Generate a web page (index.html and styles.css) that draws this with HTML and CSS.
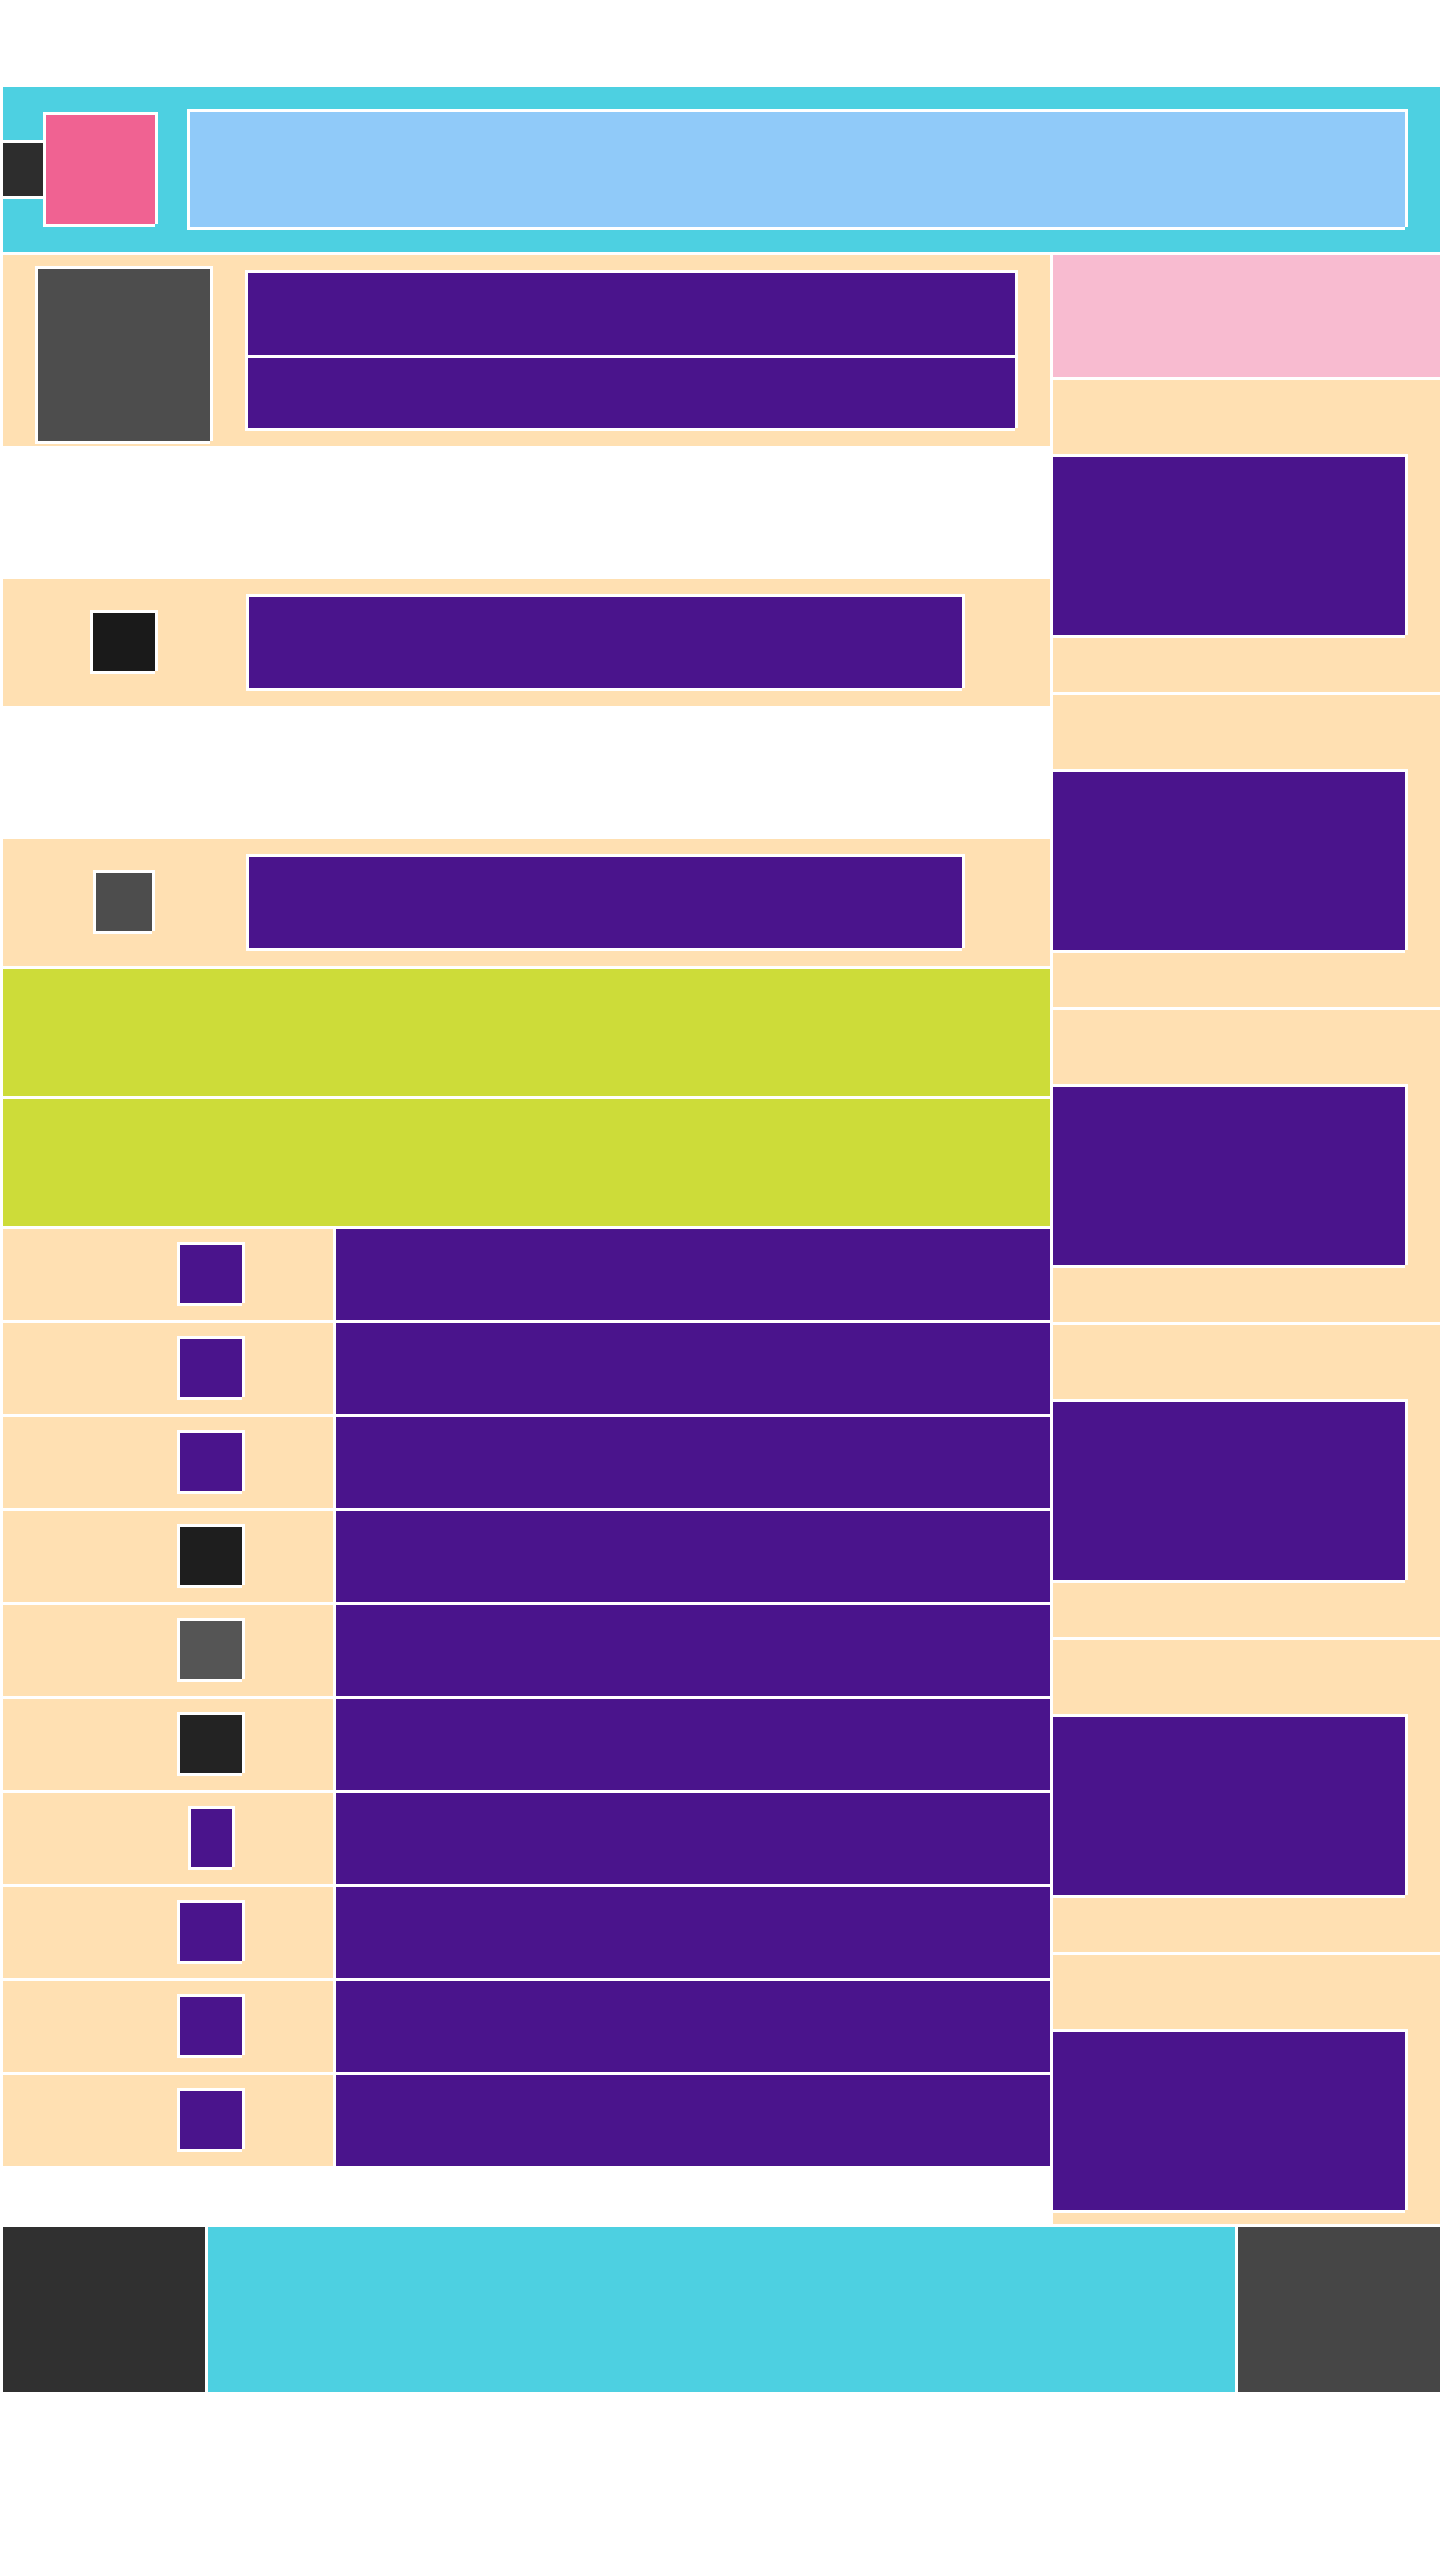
FILE: index.html
```html
<!DOCTYPE html>
<html lang="en">
<head>
<meta charset="utf-8">
<title>Page</title>
<link rel="stylesheet" href="styles.css">
</head>
<body>
<div class="page">
  <header class="header">
    <div class="menu-button"></div>
    <div class="logo frame"></div>
    <div class="search frame"></div>
  </header>
  <main class="main">
    <div class="content">
      <section class="feature">
        <div class="feature-thumb frame"></div>
        <div class="feature-text">
          <div class="feature-title frame"></div>
          <div class="feature-meta frame"></div>
        </div>
      </section>
      <section class="item item-spaced">
        <div class="item-slot"><div class="thumb thumb-wide tone-black frame"></div></div>
        <div class="item-text frame"></div>
      </section>
      <section class="item item-spaced">
        <div class="item-slot"><div class="thumb thumb-mid tone-gray frame"></div></div>
        <div class="item-text frame"></div>
      </section>
      <div class="banner"></div>
      <div class="banner"></div>
      <div class="row"><div class="row-icon"><div class="icon tone-purple frame"></div></div><div class="row-text"></div></div>
      <div class="row"><div class="row-icon"><div class="icon tone-purple frame"></div></div><div class="row-text"></div></div>
      <div class="row"><div class="row-icon"><div class="icon tone-purple frame"></div></div><div class="row-text"></div></div>
      <div class="row"><div class="row-icon"><div class="icon tone-ink frame"></div></div><div class="row-text"></div></div>
      <div class="row"><div class="row-icon"><div class="icon tone-slate frame"></div></div><div class="row-text"></div></div>
      <div class="row"><div class="row-icon"><div class="icon tone-coal frame"></div></div><div class="row-text"></div></div>
      <div class="row"><div class="row-icon"><div class="icon icon-narrow tone-purple frame"></div></div><div class="row-text"></div></div>
      <div class="row"><div class="row-icon"><div class="icon tone-purple frame"></div></div><div class="row-text"></div></div>
      <div class="row"><div class="row-icon"><div class="icon tone-purple frame"></div></div><div class="row-text"></div></div>
      <div class="row"><div class="row-icon"><div class="icon tone-purple frame"></div></div><div class="row-text"></div></div>
    </div>
    <aside class="sidebar">
      <div class="promo"></div>
      <div class="card"><div class="card-media frame"></div></div>
      <div class="card"><div class="card-media frame"></div></div>
      <div class="card"><div class="card-media frame"></div></div>
      <div class="card"><div class="card-media frame"></div></div>
      <div class="card"><div class="card-media frame"></div></div>
      <div class="card card-last"><div class="card-media frame"></div></div>
    </aside>
  </main>
  <footer class="footer">
    <div class="footer-start"></div>
    <div class="footer-middle"></div>
    <div class="footer-end"></div>
  </footer>
</div>
</body>
</html>
```

FILE: styles.css
```css
html, body {
  margin: 0;
  background: #fff;
}

.page {
  display: flex;
  flex-direction: column;
  gap: 3px;
  padding: 87px 0 0 3px;
}

/* White 3px outline with the bottom-right corner left open */
.frame {
  box-shadow:
    -3px -3px 0 #fff,
    3px -3px 0 #fff,
    -3px 3px 0 #fff,
    3px 0 0 #fff,
    0 3px 0 #fff;
}

.header {
  display: flex;
  align-items: center;
  height: 165px;
  background: #4dd0e1;
}

.menu-button {
  width: 40px;
  height: 53px;
  background: #2d2d2d;
  box-shadow: 0 -3px 0 #fff, 0 3px 0 #fff;
}

.logo {
  width: 109px;
  height: 109px;
  margin-left: 3px;
  background: #f06292;
}

.search {
  width: 1215px;
  height: 115px;
  margin-left: 35px;
  background: #90caf9;
}

.main {
  display: grid;
  grid-template-columns: 1047px 387px;
  gap: 3px;
  align-items: start;
}

.content,
.sidebar {
  display: flex;
  flex-direction: column;
  gap: 3px;
}

.feature {
  display: flex;
  align-items: flex-start;
  height: 191px;
  padding-left: 35px;
  background: #ffe0b2;
}

.feature-thumb {
  width: 172px;
  height: 172px;
  margin-top: 14px;
  background: #4d4d4d;
}

.feature-text {
  display: flex;
  flex-direction: column;
  gap: 3px;
  width: 767px;
  margin: 18px 0 0 38px;
}

.feature-title {
  height: 82px;
  background: #4a148c;
}

.feature-meta {
  height: 70px;
  background: #4a148c;
}

.item {
  display: flex;
  align-items: flex-start;
  height: 127px;
  background: #ffe0b2;
}

.item-spaced {
  margin-top: 130px;
}

.item-slot {
  display: flex;
  justify-content: center;
  width: 242px;
  padding-top: 34px;
}

.thumb {
  height: 58px;
}

.thumb-wide {
  width: 62px;
}

.thumb-mid {
  width: 56px;
}

.item-text {
  width: 713px;
  height: 91px;
  margin: 18px 0 0 4px;
  background: #4a148c;
}

.banner {
  height: 127px;
  background: #cddc39;
}

.row {
  display: grid;
  grid-template-columns: 330px 714px;
  gap: 3px;
  height: 91px;
}

.row-icon {
  display: flex;
  justify-content: center;
  align-items: flex-start;
  padding: 16px 0 0 86px;
  background: #ffe0b2;
}

.row-text {
  background: #4a148c;
}

.icon {
  width: 62px;
  height: 58px;
}

.icon-narrow {
  width: 41px;
}

.tone-purple { background: #4a148c; }
.tone-black { background: #1a1a1a; }
.tone-gray { background: #4d4d4d; }
.tone-ink { background: #1e1e1e; }
.tone-slate { background: #555; }
.tone-coal { background: #232323; }

.promo {
  height: 122px;
  background: #f8bbd0;
}

.card {
  box-sizing: border-box;
  height: 312px;
  padding-top: 77px;
  background: #ffe0b2;
}

.card-last {
  height: 269px;
}

.card-media {
  width: 352px;
  height: 178px;
  background: #4a148c;
}

.footer {
  display: grid;
  grid-template-columns: 202px 1027px 202px;
  gap: 3px;
  height: 165px;
}

.footer-start { background: #303030; }
.footer-middle { background: #4dd0e1; }
.footer-end { background: #464646; }
```
